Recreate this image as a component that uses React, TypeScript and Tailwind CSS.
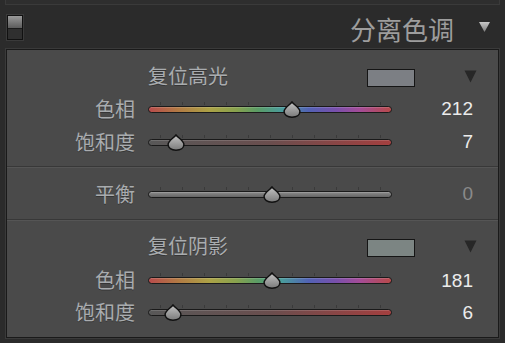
import React from "react";

const cjk = "[font-family:'Noto_Sans_CJK_SC','Noto_Sans_CJK_JP',sans-serif]";
const num = "[font-family:'Liberation_Sans',Arial,sans-serif]";

function Thumb({ x }: { x: number }) {
  return (
    <svg
      className="absolute top-[2px]"
      style={{ left: x - 9 }}
      width="18"
      height="17"
      viewBox="0 0 18 17"
    >
      <defs>
        <linearGradient id="tg" x1="0" y1="0" x2="0" y2="1">
          <stop offset="0" stopColor="#c4c4c4" />
          <stop offset="1" stopColor="#7a7a7a" />
        </linearGradient>
      </defs>
      <path
        d="M9 0.9 C10.6 3.6 16.9 6.6 16.9 10.6 C16.9 14 13.6 16.2 9 16.2 C4.4 16.2 1.1 14 1.1 10.6 C1.1 6.6 7.4 3.6 9 0.9 Z"
        fill="url(#tg)"
        stroke="#111"
        strokeWidth="1.5"
        strokeLinejoin="round"
      />
    </svg>
  );
}

function Slider({ kind, pos }: { kind: "hue" | "sat" | "bal"; pos: number }) {
  const track =
    kind === "hue"
      ? "bg-[linear-gradient(to_right,#b84c4c_0%,#b27a44_12%,#aca246_25%,#88a24e_36%,#5a9c66_45%,#4a9c9c_55%,#5262b4_66%,#7850ac_77%,#a44c98_87%,#b84a4a_100%)]"
      : kind === "sat"
      ? "bg-[linear-gradient(to_right,#585858_0%,#6a4e4e_50%,#a43f3f_100%)]"
      : "bg-[linear-gradient(to_bottom,#8c8c8c,#646464)]";
  return (
    <div className="relative w-[244px] h-[20px]">
      <div className="absolute left-[12px] top-[3px] w-[221px] flex justify-between">
        {Array.from({ length: 11 }).map((_, i) => (
          <div key={i} className="w-px h-[3px] bg-[#3a3a3a]" />
        ))}
      </div>
      <div
        className={`absolute left-0 right-0 top-[7px] h-[7px] rounded-full border border-[#1a1a1a] ${track} shadow-[inset_0_1px_0_rgba(255,255,255,0.15)]`}
      />
      <Thumb x={pos} />
    </div>
  );
}

function Row({
  label,
  kind,
  pos,
  value,
  h,
  dim,
}: {
  label: string;
  kind: "hue" | "sat" | "bal";
  pos: number;
  value: string;
  h: string;
  dim?: boolean;
}) {
  return (
    <div className={`flex items-center ${h}`}>
      <div
        className={`w-[128px] text-right text-[20px] leading-none text-[#a9acaf] ${cjk} [text-shadow:0_1px_0_rgba(0,0,0,0.3)]`}
      >
        {label}
      </div>
      <div className="ml-[13px]">
        <Slider kind={kind} pos={pos} />
      </div>
      <div
        className={`w-[81px] text-right text-[19px] leading-none ${num} ${
          dim ? "text-[#8a8a8a]" : "text-[#ececec]"
        }`}
      >
        {value}
      </div>
    </div>
  );
}

function SectionHeader({ title, swatch }: { title: string; swatch: string }) {
  return (
    <div className="flex items-center h-[32px]">
      <div className="w-[141px]" />
      <div
        className={`w-[219px] text-[20px] leading-none text-[#a9acaf] ${cjk} [text-shadow:0_1px_0_rgba(0,0,0,0.3)]`}
      >
        {title}
      </div>
      <div className={`w-[48px] h-[18px] mt-[3px] border border-[#151515] ${swatch}`} />
      <div className="w-[49px]" />
      <svg width="13" height="13" viewBox="0 0 13 13">
        <path d="M0.5 0.5 L12.5 0.5 L6.5 12.5 Z" fill="#272727" />
      </svg>
    </div>
  );
}

function Separator() {
  return (
    <div>
      <div className="h-px bg-[#383838]" />
      <div className="h-px bg-[#555555]" />
    </div>
  );
}

export default function App() {
  return (
    <div className="w-[505px] h-[343px] bg-[#2b2b2b] overflow-hidden">
      <div className="ml-[5px] w-[495px] h-[5px] border-x border-b border-[#3a3a3a] bg-[#2e2e2e]" />
      <div className="h-[44px] flex items-center">
        <div className="ml-[7px] w-[16px] h-[25px] border border-[#111] flex flex-col shadow-[0_0_0_1px_#3a3a3a]">
          <div className="h-[12px] bg-[linear-gradient(to_bottom,#9a9a9a,#5c5c5c)]" />
          <div className="flex-1 bg-[#2f2f2f] border-t border-[#1a1a1a]" />
        </div>
        <div className="flex-1" />
        <div className={`text-[26px] leading-none text-[#9d9d9d] mt-[3px] ${cjk}`}>分离色调</div>
        <svg className="ml-[25px] mr-[15px]" width="11" height="10" viewBox="0 0 11 10">
          <defs>
            <linearGradient id="hg" x1="0" y1="0" x2="0" y2="1">
              <stop offset="0" stopColor="#c8c8c8" />
              <stop offset="1" stopColor="#7c7c7c" />
            </linearGradient>
          </defs>
          <path d="M0 0 L11 0 L5.5 10 Z" fill="url(#hg)" />
        </svg>
      </div>
      <div className="ml-[6px] w-[493px] h-[289px] border border-[#1a1a1a] bg-[#4a4a4a] shadow-[0_0_0_1px_#3a3a3a]">
        <div className="pt-[10px] pb-[8px]">
          <SectionHeader title="复位高光" swatch="bg-[#7c7f84]" />
          <Row label="色相" kind="hue" pos={144} value="212" h="h-[33px]" />
          <Row label="饱和度" kind="sat" pos={28} value="7" h="h-[33px]" />
        </div>
        <Separator />
        <Row label="平衡" kind="bal" pos={124} value="0" h="h-[51px]" dim />
        <Separator />
        <div className="pt-[9px] pb-[11px]">
          <SectionHeader title="复位阴影" swatch="bg-[#7c8583]" />
          <Row label="色相" kind="hue" pos={124} value="181" h="h-[36px]" />
          <Row label="饱和度" kind="sat" pos={25} value="6" h="h-[28px]" />
        </div>
      </div>
    </div>
  );
}
